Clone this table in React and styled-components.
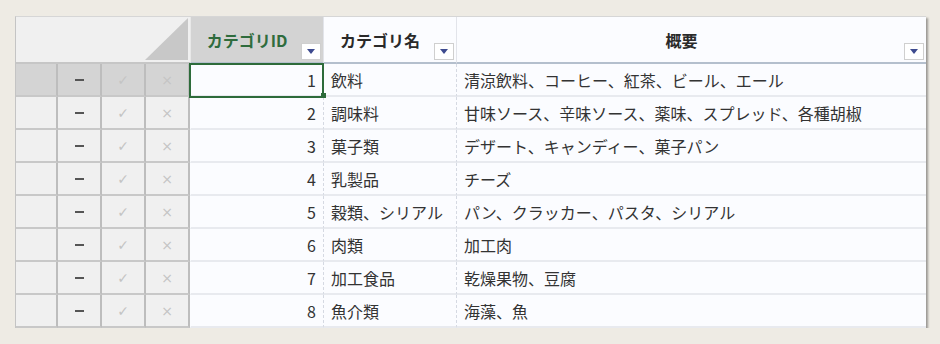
import React from 'react';
import styled, { createGlobalStyle } from 'styled-components';

const GlobalStyle = createGlobalStyle`
  body {
    margin: 0;
    background: #eeebe4;
    font-family: "Noto Sans CJK JP", "Noto Sans", sans-serif;
  }
`;

const Page = styled.div`
  padding: 16px 0 0 15px;
`;

const Sheet = styled.div`
  width: 910px;
  border-top: 1px solid #d6d6d6;
  border-left: 1px solid #c4c4c4;
  background: #fbfcff;
  box-shadow: 2px 2px 2px rgba(0, 0, 0, 0.35);
  display: grid;
  grid-template-columns: 42px 44px 44px 44px 133px 133px 1fr;
`;

const Corner = styled.div`
  grid-column: 1 / span 4;
  height: 45px;
  background: #f0f0f0;
  border-bottom: 2px solid #c6c6c6;
  position: relative;
  overflow: hidden;
  &::after {
    content: '';
    position: absolute;
    right: 2px;
    bottom: 2px;
    width: 0;
    height: 0;
    border-left: 43px solid transparent;
    border-bottom: 42px solid #c8c8c8;
  }
`;

const HeadCell = styled.div`
  height: 45px;
  position: relative;
  display: flex;
  align-items: center;
  justify-content: center;
  padding-right: 20px;
  font-size: 16px;
  font-weight: 700;
  color: ${p => (p.$active ? '#2f6c3d' : '#2a2a2a')};
  background: ${p => (p.$active ? '#d3d3d3' : '#fbfcff')};
  border-left: 1px solid ${p => (p.$active ? '#e8e8e8' : '#e2e4ea')};
  border-bottom: 2px solid #b4bfcd;
`;

const DropButton = styled.span`
  position: absolute;
  right: 2px;
  bottom: 2px;
  width: 18px;
  height: 15px;
  background: #fff;
  border: 1px solid #cfcfcf;
  display: flex;
  align-items: center;
  justify-content: center;
  &::before {
    content: '';
    border-left: 4px solid transparent;
    border-right: 4px solid transparent;
    border-top: 5px solid #3d4a8f;
  }
`;

const Gutter = styled.div`
  height: 31px;
  display: flex;
  align-items: center;
  justify-content: center;
  background: ${p => (p.$active ? '#d4d4d4' : '#f0f0f0')};
  border-right: 2px solid #bdbdbd;
  border-bottom: 2px solid #c8c8c8;
  font-size: 14px;
  color: ${p => p.$color};
  font-family: "DejaVu Sans", sans-serif;
`;

const Dash = styled.span`
  width: 9px;
  height: 2px;
  background: #555;
`;

const Cell = styled.div`
  height: 31px;
  display: flex;
  align-items: center;
  justify-content: ${p => (p.$num ? 'flex-end' : 'flex-start')};
  padding: 0 ${p => (p.$num ? '7px' : '7px')};
  font-size: 16px;
  color: #333;
  border-bottom: 2px solid #e8eaef;
  border-left: 1px dashed ${p => (p.$num ? 'transparent' : '#d5d9e2')};
  position: relative;
  white-space: nowrap;
  ${p =>
    p.$selected &&
    `
    outline: 2px solid #2d6b3a;
    outline-offset: -1px;
    z-index: 1;
    &::after {
      content: '';
      position: absolute;
      right: -3px;
      bottom: -3px;
      width: 5px;
      height: 5px;
      background: #2d6b3a;
    }
  `}
`;

const rows = [
  [1, '飲料', '清涼飲料、コーヒー、紅茶、ビール、エール'],
  [2, '調味料', '甘味ソース、辛味ソース、薬味、スプレッド、各種胡椒'],
  [3, '菓子類', 'デザート、キャンディー、菓子パン'],
  [4, '乳製品', 'チーズ'],
  [5, '穀類、シリアル', 'パン、クラッカー、パスタ、シリアル'],
  [6, '肉類', '加工肉'],
  [7, '加工食品', '乾燥果物、豆腐'],
  [8, '魚介類', '海藻、魚'],
];

export default function App() {
  return (
    <Page>
      <GlobalStyle />
      <Sheet>
        <Corner />
        <HeadCell $active>カテゴリID<DropButton /></HeadCell>
        <HeadCell>カテゴリ名<DropButton /></HeadCell>
        <HeadCell>概要<DropButton /></HeadCell>
        {rows.map(([id, name, desc], i) => (
          <React.Fragment key={id}>
            <Gutter $active={i === 0} />
            <Gutter $active={i === 0}><Dash /></Gutter>
            <Gutter $active={i === 0} $color="#c4c4c4">✓</Gutter>
            <Gutter $active={i === 0} $color="#c4c4c4">×</Gutter>
            <Cell $num $selected={i === 0}>{id}</Cell>
            <Cell>{name}</Cell>
            <Cell>{desc}</Cell>
          </React.Fragment>
        ))}
      </Sheet>
    </Page>
  );
}
